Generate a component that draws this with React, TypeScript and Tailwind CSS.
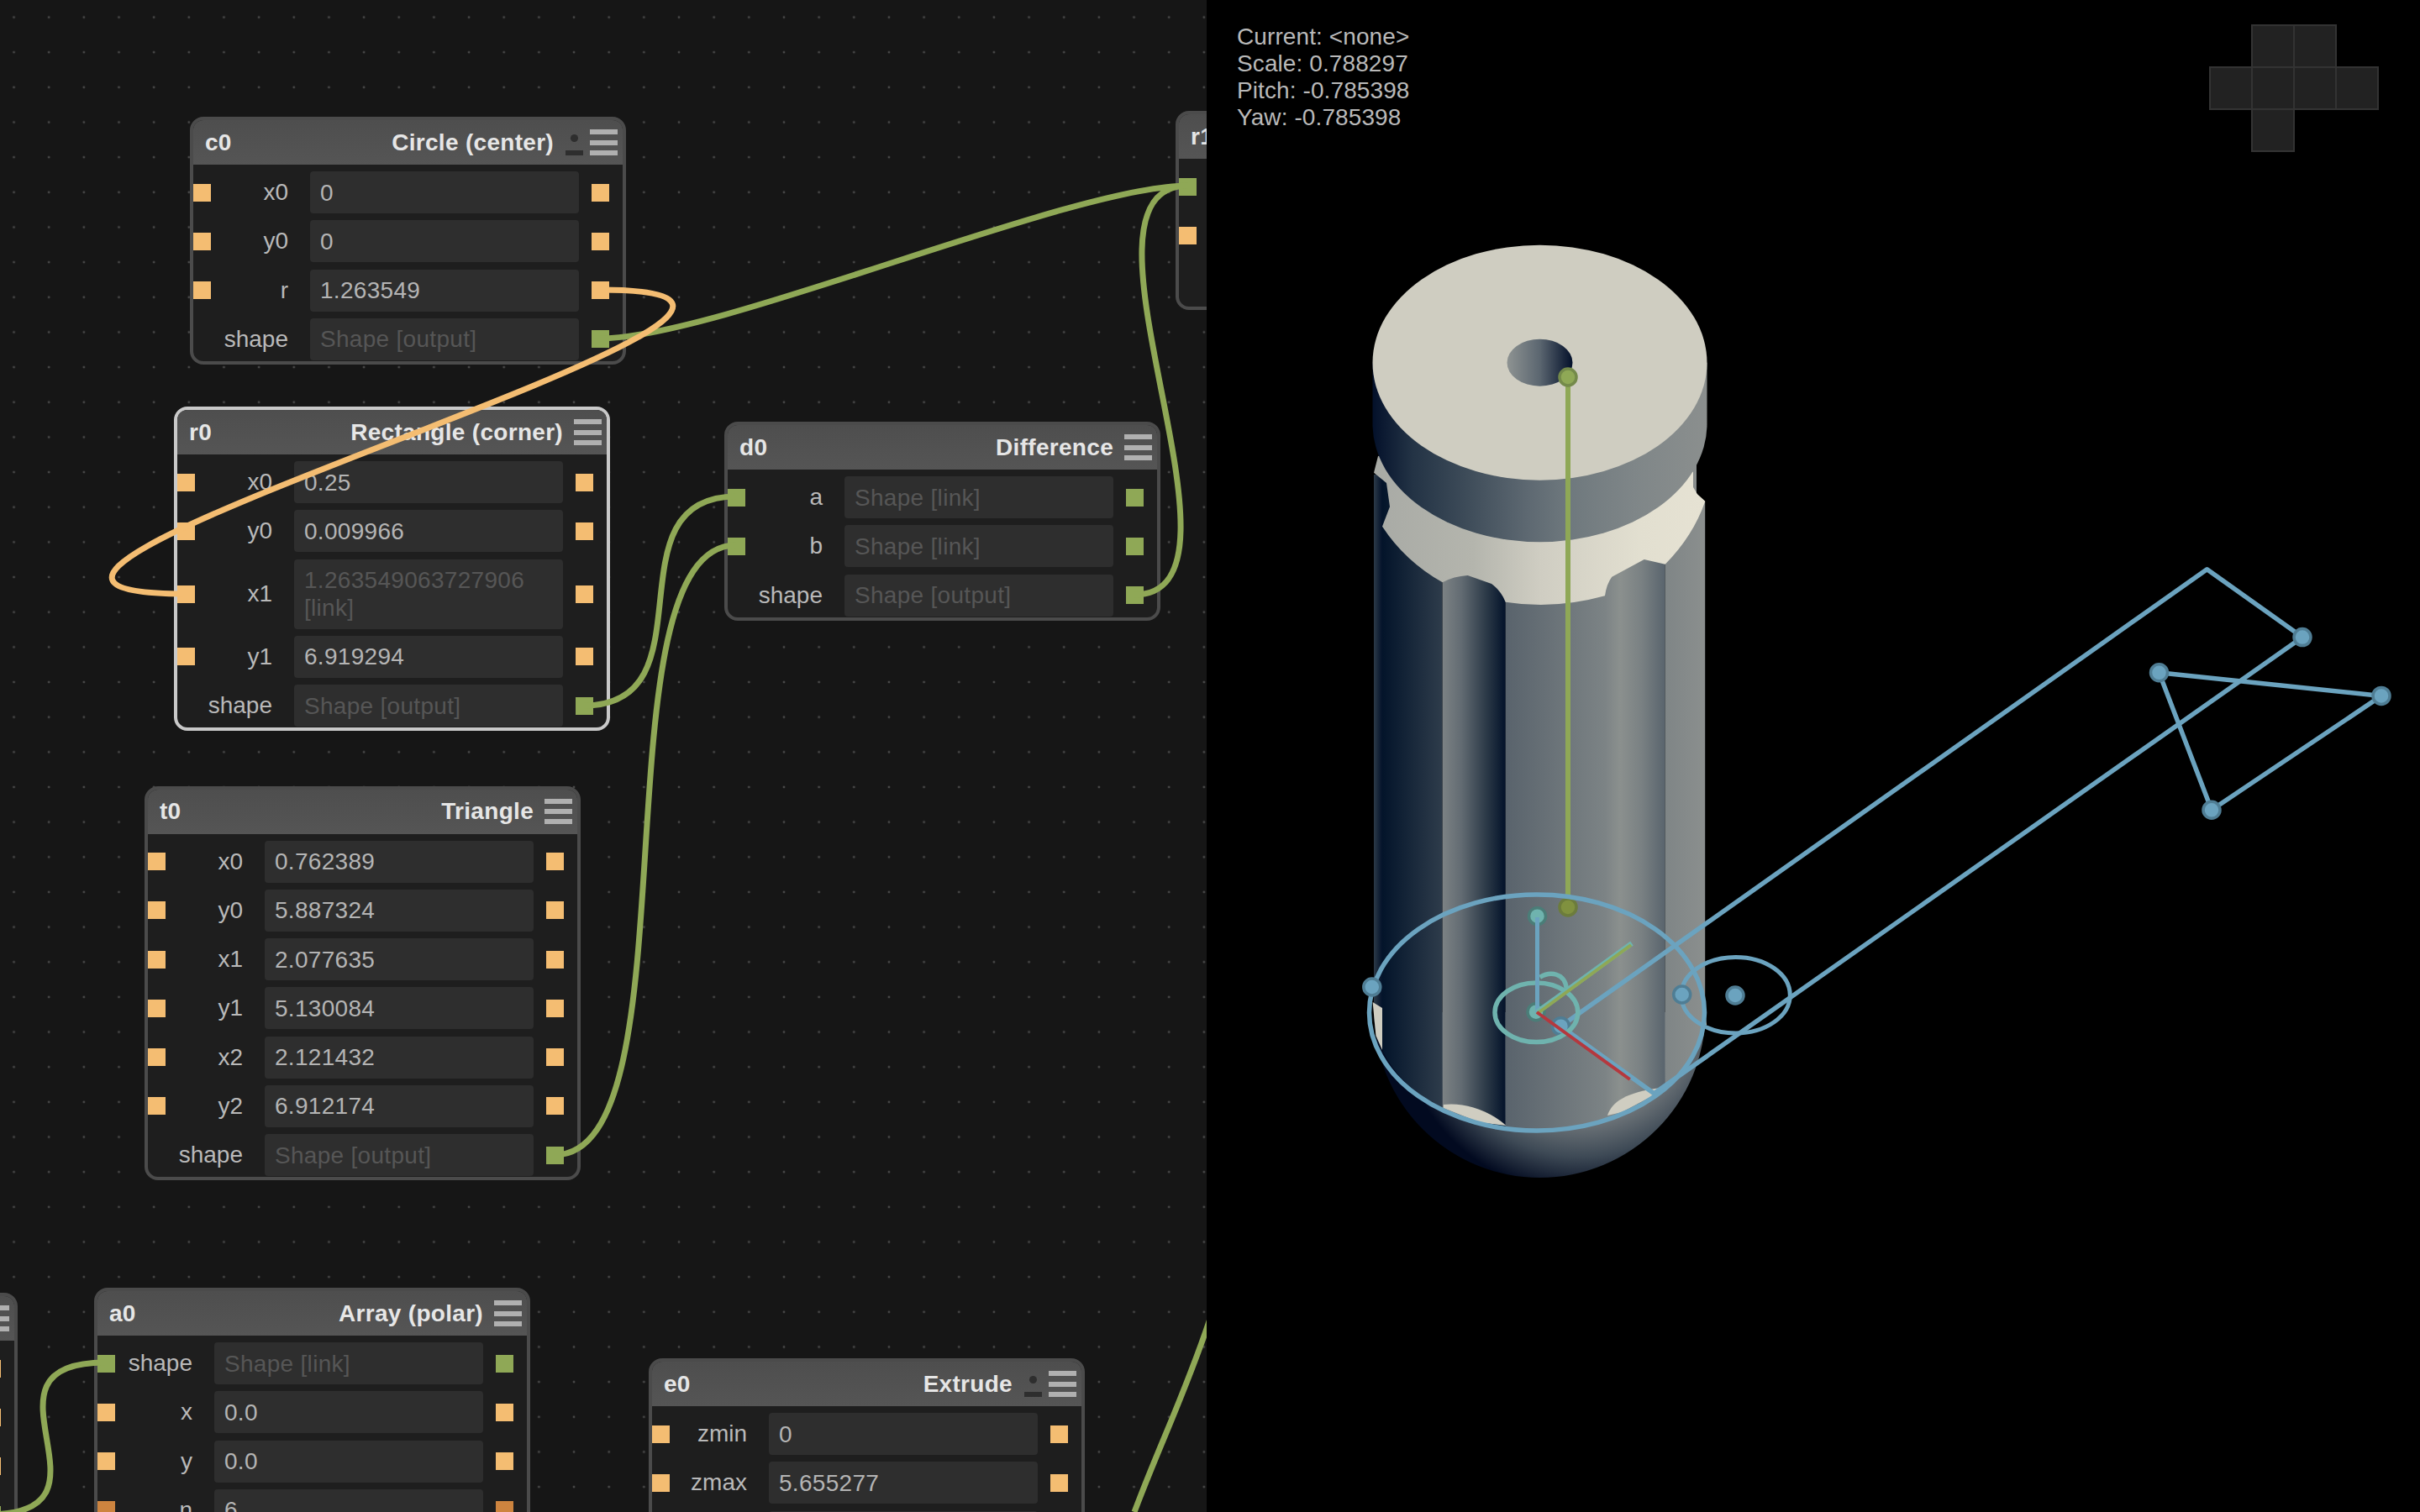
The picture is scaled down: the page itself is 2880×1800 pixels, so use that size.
const FONT = "font-['Liberation_Sans',Arial,sans-serif]";

type Port = "orange" | "green" | "dark" | null;

type Row = {
  label: string;
  value: string;
  muted?: boolean;
  left?: Port;
  right?: Port;
};

type NodeData = {
  id: string;
  title: string;
  pos: string;
  selected?: boolean;
  dot?: boolean;
  rows: Row[];
};

const portClass = {
  orange: "bg-[#f4bd72]",
  green: "bg-[#8fa856]",
  dark: "bg-[#cd843f]",
};

const num = (label: string, value: string): Row => ({ label, value, left: "orange", right: "orange" });
const out = (): Row => ({ label: "shape", value: "Shape [output]", muted: true, left: null, right: "green" });
const link = (label: string): Row => ({ label, value: "Shape [link]", muted: true, left: "green", right: "green" });

const nodes: NodeData[] = [
  {
    id: "c0",
    title: "Circle (center)",
    pos: "left-[226px] top-[139px]",
    dot: true,
    rows: [num("x0", "0"), num("y0", "0"), num("r", "1.263549"), out()],
  },
  {
    id: "r0",
    title: "Rectangle (corner)",
    pos: "left-[207px] top-[484px]",
    selected: true,
    rows: [
      num("x0", "0.25"),
      num("y0", "0.009966"),
      { ...num("x1", "1.263549063727906 [link]"), muted: true },
      num("y1", "6.919294"),
      out(),
    ],
  },
  {
    id: "t0",
    title: "Triangle",
    pos: "left-[172px] top-[935.5px]",
    rows: [
      num("x0", "0.762389"),
      num("y0", "5.887324"),
      num("x1", "2.077635"),
      num("y1", "5.130084"),
      num("x2", "2.121432"),
      num("y2", "6.912174"),
      out(),
    ],
  },
  {
    id: "d0",
    title: "Difference",
    pos: "left-[862px] top-[502px]",
    rows: [link("a"), link("b"), out()],
  },
  {
    id: "a0",
    title: "Array (polar)",
    pos: "left-[112px] top-[1533px]",
    rows: [
      link("shape"),
      num("x", "0.0"),
      num("y", "0.0"),
      { label: "n", value: "6", left: "dark", right: "dark" },
    ],
  },
  {
    id: "e0",
    title: "Extrude",
    pos: "left-[772px] top-[1617px]",
    dot: true,
    rows: [num("zmin", "0"), num("zmax", "5.655277"), link("shape")],
  },
  {
    id: "",
    title: "",
    pos: "left-[-498px] top-[1539px]",
    rows: [num("", ""), num("", ""), num("", ""), out()],
  },
  {
    id: "r1",
    title: "",
    pos: "left-[1399px] top-[132px]",
    rows: [link(""), num("", ""), out()],
  },
];

function NodeCard({ node }: { node: NodeData }) {
  return (
    <div
      className={`absolute ${node.pos} w-[519px] overflow-hidden rounded-[16px] border-[4px] bg-[#1e1e1e] ${
        node.selected ? "border-[#c9c9c9]" : "border-[#4b4b4b]"
      }`}
    >
      <div className="flex h-[53px] items-center bg-gradient-to-b from-[#4e4e4e] to-[#555555] pl-[14px] pr-[6px] text-[28px] font-bold tracking-[0.3px] text-[#e6e6e6]">
        <span>{node.id}</span>
        <span className="ml-auto">{node.title}</span>
        {node.dot ? (
          <span className="ml-[14px] flex w-[21px] flex-col items-center gap-[10px] pt-[5px]">
            <span className="h-[9px] w-[9px] rounded-full bg-[#2e2e2e]" />
            <span className="h-[6px] w-[21px] bg-[#2e2e2e]" />
          </span>
        ) : null}
        <span className={`flex w-[33px] flex-col gap-[6.4px] ${node.dot ? "ml-[8px]" : "ml-[13px]"}`}>
          <span className="h-[6px] bg-[#b0b0b0]" />
          <span className="h-[6px] bg-[#b0b0b0]" />
          <span className="h-[6px] bg-[#b0b0b0]" />
        </span>
      </div>
      <div className="flex flex-col gap-[8.3px] pb-[1px] pt-[8px]">
        {node.rows.map((row, i) => (
          <div key={i} className="flex items-center">
            <span className={`h-[21px] w-[21px] shrink-0 ${row.left ? portClass[row.left] : ""}`} />
            <span className="w-[92px] shrink-0 text-right text-[28px] text-[#b9b9b9]">{row.label}</span>
            <div
              className={`ml-[26px] flex min-h-[50px] w-[320px] shrink-0 items-center rounded-[4px] bg-[#2e2e2e] px-[12px] py-[8.5px] text-[28px] leading-[33px] tracking-[0.3px] ${
                row.muted ? "text-[#565656]" : "text-[#b4b4b4]"
              }`}
            >
              {row.value}
            </div>
            <span className={`ml-[15px] h-[21px] w-[21px] shrink-0 ${row.right ? portClass[row.right] : ""}`} />
          </div>
        ))}
      </div>
    </div>
  );
}

function Wires() {
  return (
    <svg className="absolute inset-0 h-full w-full" viewBox="0 0 1436 1800" fill="none" strokeWidth="7">
      <g stroke="#8fa856">
        <path d="M714 403 C854 403 1274 221 1414 221" />
        <path d="M1350 708 C1510 708 1254 221 1414 221" />
        <path d="M695 840 C850 840 721 591 876 591" />
        <path d="M660 1375 C830 1375 706 649 876 649" />
        <path d="M-14 1803 C156 1803 -45 1622 125 1622" />
        <path d="M1350 1800 C1380 1720 1410 1660 1440 1570" />
      </g>
      <path d="M714 345 C1149 345 -215 707 220 707" stroke="#f4bd72" />
    </svg>
  );
}

function Model() {
  const blue = "#6ba3bf";
  const blueDark = "#4f7d94";
  const teal = "#6fb3ae";
  return (
    <svg className="absolute inset-0 h-full w-full" viewBox="1436 0 1444 1800" fill="none">
      <defs>
        <linearGradient id="band" gradientUnits="userSpaceOnUse" x1="1633" x2="2032" y1="0" y2="0">
          <stop offset="0" stopColor="#03102a" />
          <stop offset="0.12" stopColor="#233345" />
          <stop offset="0.29" stopColor="#3f4d5a" />
          <stop offset="0.46" stopColor="#5d6871" />
          <stop offset="0.58" stopColor="#6e787d" />
          <stop offset="0.78" stopColor="#7f8688" />
          <stop offset="1" stopColor="#8b8f8e" />
        </linearGradient>
        <linearGradient id="hole">
          <stop offset="0" stopColor="#8e9392" />
          <stop offset="0.5" stopColor="#5b6670" />
          <stop offset="1" stopColor="#03102a" />
        </linearGradient>
        <linearGradient id="ring" gradientUnits="userSpaceOnUse" x1="1635" x2="2030" y1="0" y2="0">
          <stop offset="0" stopColor="#a8aaa5" />
          <stop offset="0.3" stopColor="#b4b5ad" />
          <stop offset="0.5" stopColor="#cfcdc2" />
          <stop offset="0.8" stopColor="#e2dfd0" />
          <stop offset="1" stopColor="#e6e2d3" />
        </linearGradient>
        <linearGradient id="a1">
          <stop offset="0" stopColor="#2c3a48" />
          <stop offset="1" stopColor="#03122a" />
        </linearGradient>
        <linearGradient id="a2">
          <stop offset="0" stopColor="#03142a" />
          <stop offset="1" stopColor="#2e3c4b" />
        </linearGradient>
        <linearGradient id="b">
          <stop offset="0" stopColor="#7c8284" />
          <stop offset="0.3" stopColor="#626b72" />
          <stop offset="0.7" stopColor="#2b3947" />
          <stop offset="1" stopColor="#03122a" />
        </linearGradient>
        <linearGradient id="c">
          <stop offset="0" stopColor="#59636c" />
          <stop offset="1" stopColor="#7c8385" />
        </linearGradient>
        <linearGradient id="d">
          <stop offset="0" stopColor="#7c8385" />
          <stop offset="0.25" stopColor="#8b908e" />
          <stop offset="0.6" stopColor="#7a8183" />
          <stop offset="1" stopColor="#59646d" />
        </linearGradient>
        <linearGradient id="e">
          <stop offset="0" stopColor="#7f8586" />
          <stop offset="1" stopColor="#8b8f8e" />
        </linearGradient>
        <radialGradient id="sphere" gradientUnits="userSpaceOnUse" cx="1880" cy="1205" r="215">
          <stop offset="0" stopColor="#959896" />
          <stop offset="0.55" stopColor="#7d8284" />
          <stop offset="0.8" stopColor="#3e4a56" />
          <stop offset="1" stopColor="#020a20" />
        </radialGradient>
        <clipPath id="body">
          <path d="M1635 565 H1960 L2019 553 V588 L2029.3 597 V1205 A197 142 0 0 1 1635 1205 Z" />
        </clipPath>
      </defs>

      {/* view cube */}
      <g fill="#222222" stroke="#333333" strokeWidth="2">
        <rect x="2680" y="30" width="50" height="50" />
        <rect x="2730" y="30" width="50" height="50" />
        <rect x="2630" y="80" width="50" height="50" />
        <rect x="2680" y="80" width="50" height="50" />
        <rect x="2730" y="80" width="50" height="50" />
        <rect x="2780" y="80" width="50" height="50" />
        <rect x="2680" y="130" width="50" height="50" />
      </g>

      {/* solid */}
      <path d="M1635.5 1205 A197 197 0 0 0 2029.5 1205 Z" fill="url(#sphere)" />
      <g clipPath="url(#body)">
        <rect x="1635" y="550" width="10" height="800" fill="url(#a1)" />
        <rect x="1645" y="550" width="71.7" height="800" fill="url(#a2)" />
        <rect x="1716.7" y="550" width="75" height="800" fill="url(#b)" />
        <rect x="1791.7" y="550" width="118.3" height="800" fill="url(#c)" />
        <rect x="1910" y="550" width="71.7" height="800" fill="url(#d)" />
        <rect x="1981.7" y="550" width="48" height="800" fill="url(#e)" />
      </g>
      <g fill="#cfcdc1">
        <path d="M1717.8 1315 C1740 1312 1770 1320 1792.4 1340 L1760 1336 L1717.8 1319 Z" />
        <path d="M1913 1328 C1918 1312 1935 1300 1977 1295 L1964 1306 L1930 1324 Z" />
        <path d="M1633.6 1193 L1645 1200 V1250 L1637.4 1233 Z" />
        <path d="M2027.8 1197 L2031 1220 H2028 Z" />
      </g>
      <path
        d="M1640 543 L1635 562.7 L1650 575 L1654 603.3 L1645 626.7 Q1672 668 1716.7 693.3 Q1730 686 1746.7 685 L1775 695 Q1786 703 1791.7 716.7 Q1850 726 1910 709.3 Q1912 695 1918.3 686.7 L1956.7 666 L1981.7 671.7 Q2015 638 2029.3 596.7 L2020 588.3 L2015 580 L2015 561.7 L1830 500 Z"
        fill="url(#ring)"
      />
      <path d="M1633.5 431.7 V504.7 A199 140.5 0 0 0 2031.5 504.7 V431.7 Z" fill="url(#band)" />
      <ellipse cx="1832.5" cy="431.7" rx="199" ry="140" fill="#cfcdc1" />
      <ellipse cx="1832.5" cy="431.7" rx="39" ry="28" fill="url(#hole)" />

      {/* green handle */}
      <path d="M1866 449 V1080" stroke="#8fa856" strokeWidth="6" />
      <circle cx="1866" cy="449" r="10" fill="#8fa856" stroke="#748a4a" strokeWidth="3.5" />
      <circle cx="1866" cy="1080" r="10" fill="#80913f" stroke="#6c7c3c" strokeWidth="3.5" />

      {/* sketch lines */}
      <g stroke={blue} strokeWidth="5.5">
        <ellipse cx="1829" cy="1205.5" rx="199.5" ry="140.5" />
        <ellipse cx="2065.6" cy="1184.7" rx="64.7" ry="45.3" strokeWidth="5" />
        <path d="M1857.5 1221.7 L2626.5 677.7 L2740 758.6 L1968.4 1301.7 Z" strokeLinejoin="round" />
        <path d="M2569.5 800.8 L2834 828.4 L2632 964.3 Z" strokeLinejoin="round" />
      </g>

      <g fill={blue} stroke={blueDark} strokeWidth="3.5">
        <circle cx="1632.8" cy="1175" r="10" />
        <circle cx="2001.7" cy="1184" r="10" />
        <circle cx="2065" cy="1185" r="10" />
        <circle cx="1857.5" cy="1221.7" r="10" />
        <circle cx="2740" cy="758.6" r="10" />
        <circle cx="2569.5" cy="800.8" r="10" />
        <circle cx="2834" cy="828.4" r="10" />
        <circle cx="2632" cy="964.3" r="10" />
      </g>

      {/* axes */}
      <g stroke={teal} strokeWidth="5.5">
        <ellipse cx="1828.4" cy="1205.3" rx="49.4" ry="35.3" />
        <path d="M1832.6 1163.3 C1845 1156 1862 1158 1864.3 1176.7" />
      </g>
      <g fill={teal} stroke="#4b7d78" strokeWidth="3.5">
        <circle cx="1829.5" cy="1090.7" r="10" />
        <circle cx="1828" cy="1204.7" r="10" />
      </g>
      <path d="M1829.5 1092 V1205" stroke={blue} strokeWidth="5" />
      <path d="M1829 1205 L1942 1123" stroke={teal} strokeWidth="6" />
      <path d="M1829 1207 L1941 1125" stroke="#8fa856" strokeWidth="4" />
      <path d="M1829 1205 L1939.7 1285" stroke="#b5383e" strokeWidth="4" />
    </svg>
  );
}

export default function App() {
  return (
    <div className={`flex h-[1800px] w-[2880px] overflow-hidden ${FONT}`}>
      <div className="relative h-full w-[1436px] shrink-0 overflow-hidden bg-[#161616] bg-[radial-gradient(circle,#4a4a4a_1.2px,transparent_1.7px)] bg-size-[41.67px_41.67px] bg-position-[-4.3px_-0.3px]">
        {nodes.map((node) => (
          <NodeCard key={node.pos} node={node} />
        ))}
        <Wires />
      </div>
      <div className="relative h-full flex-1 bg-black">
        <Model />
        <div className="relative pl-[36px] pt-[28px] text-[28px] leading-[32px] tracking-[0.1px] text-[#b9b9b9]">
          <div>Current: &lt;none&gt;</div>
          <div>Scale: 0.788297</div>
          <div>Pitch: -0.785398</div>
          <div>Yaw: -0.785398</div>
        </div>
      </div>
    </div>
  );
}
